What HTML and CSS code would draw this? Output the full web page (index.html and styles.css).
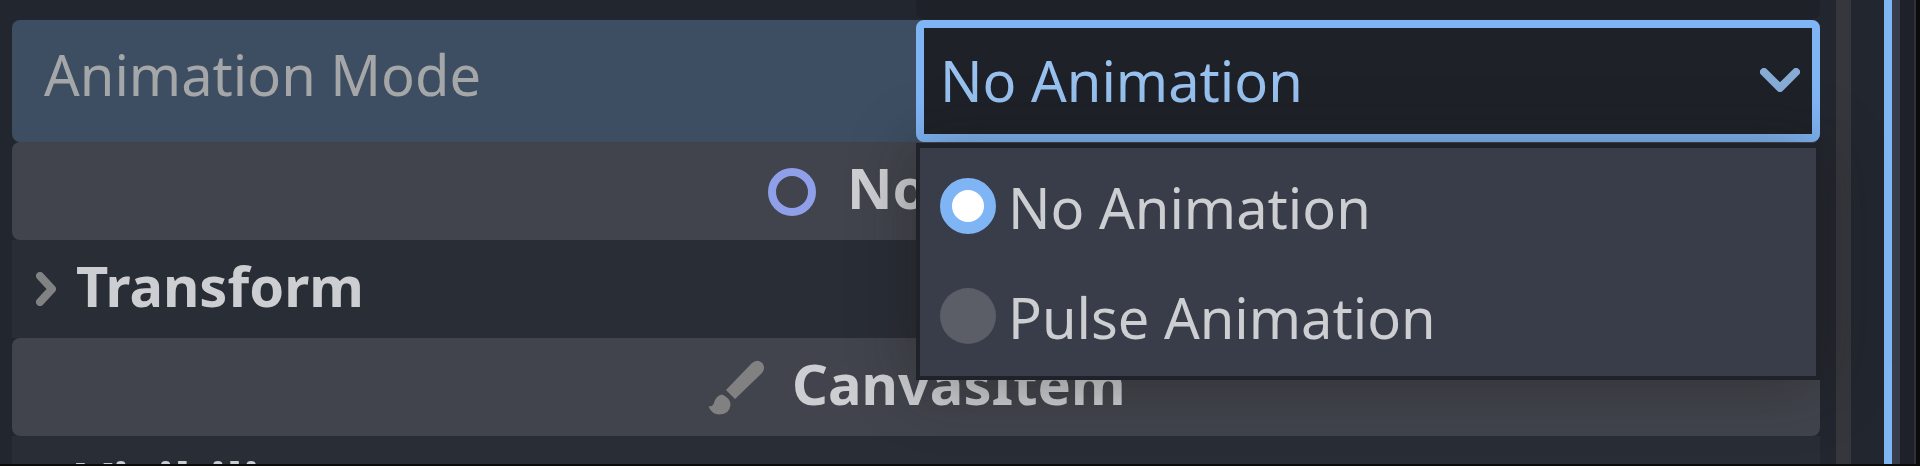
FILE: index.html
```html
<!DOCTYPE html>
<html lang="en">
<head>
<meta charset="utf-8">
<title>Inspector</title>
<link rel="stylesheet" href="styles.css">
</head>
<body>
<div class="editor">
  <div class="dock">
    <div class="inspector">
      <div class="previous"><div class="previous-value"></div></div>
      <div class="property">
        <span class="property-name">Animation Mode</span>
        <div class="select">
          <span>No Animation</span>
          <svg class="select-arrow" viewBox="0 0 40 24"><path d="M4 4 20 20 36 4"/></svg>
          <div class="menu">
            <div class="option"><i class="radio checked"></i><span>No Animation</span></div>
            <div class="option"><i class="radio"></i><span>Pulse Animation</span></div>
          </div>
        </div>
      </div>
      <div class="category node">
        <svg class="icon" viewBox="0 0 16 16"><circle cx="8" cy="8" r="5" fill="none" stroke="#8f9fea" stroke-width="2"/></svg>
        <span>Node2D</span>
      </div>
      <div class="group">
        <svg class="fold" viewBox="0 0 20 34"><path d="M4 4 16 17 4 30"/></svg>
        <span>Transform</span>
      </div>
      <div class="category canvas">
        <svg class="icon brush" viewBox="0 0 58 56"><path d="M18 30 43.500 3.500Q49-1.500 54 2.800 58.500 8 53.500 13.500L27 39Z"/><path d="M14 34.500Q22.500 38 22.500 45 21.500 54 11.500 54.500 4 54.500.5 46.500 5 46.500 6 43 7.500 36 14 34.500Z"/></svg>
        <span>CanvasItem</span>
      </div>
      <div class="group">
        <span class="fold"></span>
        <span>Visibility</span>
      </div>
    </div>
    <div class="scrollbar"></div>
  </div>
  <div class="focus-line"></div>
  <div class="dock-edge"></div>
  <div class="gutter"></div>
  <div class="outside"></div>
</div>
</body>
</html>
```
FILE: styles.css
```css
* { box-sizing: border-box; }
body {
  margin: 0;
  background: #0b0b0b;
  font: 56px/76px "Noto Sans", sans-serif;
  color: #cdced2;
  overflow: hidden;
}
.editor { display: flex; height: 464px; overflow: hidden; }
.dock {
  display: flex;
  flex: none;
  width: 1884px;
  padding-left: 12px;
  background: #22262e;
}
.inspector { width: 1808px; flex: none; }
.scrollbar { width: 15px; margin-left: 16px; background: #35373d; }
.focus-line { width: 8px; background: #80b5f5; }
.dock-edge { width: 8px; background: #373d49; }
.gutter { width: 16px; background: #1e2129; border-right: 2px solid #303137; }
.outside { flex: 1; background: #0b0b0b; }
.previous { height: 20px; padding-left: 904px; }
.previous-value { height: 19px; background: #1e2128; border-radius: 0 0 8px 8px; }
.property {
  display: flex;
  height: 122px;
  background: #3d4e63;
  border-radius: 8px;
}
.property-name { width: 904px; padding: 16px 0 0 32px; color: #a5a6a8; }
.select {
  position: relative;
  display: flex;
  flex: 1;
  justify-content: space-between;
  padding: 14px 12px 0 16px;
  background: #1e2128;
  border: 8px solid #80b5f5;
  border-radius: 8px;
  color: #98c1ef;
}
.select-arrow { width: 40px; height: 24px; margin-top: 26px; fill: none; stroke: #87add6; stroke-width: 8; stroke-linecap: round; stroke-linejoin: round; }
.menu {
  position: absolute;
  z-index: 1;
  left: -8px;
  top: 115px;
  width: 904px;
  height: 237px;
  padding: 20px;
  background: #383d49;
  border: 4px solid #1f2228;
  border-top-width: 5px;
  color: #cdced2;
  box-shadow: 0 4px 60px rgba(24, 24, 20, .4);
}
.option { display: flex; height: 110px; gap: 12px; }
.option span { padding-top: 1px; }
.radio { width: 56px; height: 56px; margin-top: 10px; border-radius: 50%; background: #5b5e67; }
.checked { background: #fff; border: 12px solid #80b5f5; }
.category {
  display: flex;
  height: 98px;
  background: #41444c;
  border-radius: 8px;
  font-weight: 700;
}
.category span { padding-top: 7px; }
.icon { width: 64px; height: 64px; margin-top: 18px; }
.node { padding-left: 748px; gap: 23px; }
.canvas { padding-left: 696px; gap: 26px; }
.brush { width: 58px; height: 56px; margin-top: 22px; fill: #818181; }
.group { display: flex; height: 98px; background: #292d35; font-weight: 700; gap: 20px; padding-left: 24px; }
.group span { padding-top: 7px; }
.fold { width: 20px; height: 34px; margin: 32px 0 0; fill: none; stroke: #818284; stroke-width: 8; stroke-linecap: round; stroke-linejoin: round; }
```
